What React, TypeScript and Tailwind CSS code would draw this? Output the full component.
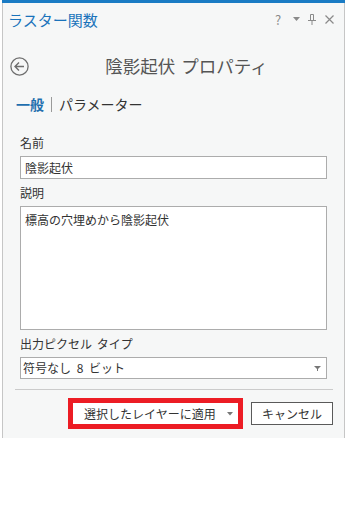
export default function App() {
  return (
    <div className="w-[348px] h-[516px] bg-white font-['Noto_Sans_CJK_JP','Noto_Sans',sans-serif] text-[#333]">
      <div className="ml-[2px] w-[343px] h-[438px] flex flex-col">
        {/* top accent */}
        <div className="h-[3px] bg-[#1a7bc4]" />
        <div className="flex-1 flex flex-col bg-[#f6f7f7] border-x border-[#c6c6c6]">
          {/* pane header */}
          <div className="h-[32px] flex items-center pl-[5px]">
            <span className="text-[15px] leading-none text-[#1a73bb]">ラスター関数</span>
            <div className="ml-auto flex items-center text-[#8a8a8a]">
              <span className="text-[13px] leading-none w-[8px]">?</span>
              <svg width="7" height="4" viewBox="0 0 7 4" className="ml-[10px]">
                <polygon points="0,0 7,0 3.5,4" fill="#8a8a8a" />
              </svg>
              <svg width="8" height="11" viewBox="0 0 8 11" className="ml-[8px]">
                <path d="M2.5 0.5h3v5.5 M2.5 0.5v5.5 M0 6.5h8 M4 6.5v4.5" fill="none" stroke="#8a8a8a" strokeWidth="1" />
              </svg>
              <svg width="9" height="9" viewBox="0 0 9 9" className="ml-[9px] mr-[10px]">
                <path d="M0.5 0.5l8 8 M8.5 0.5l-8 8" stroke="#8a8a8a" strokeWidth="1.2" />
              </svg>
            </div>
          </div>

          {/* title row */}
          <div className="mt-[17px] h-[28px] flex items-center pl-[7px]">
            <svg width="19" height="19" viewBox="0 0 19 19">
              <circle cx="9.5" cy="9.5" r="8.6" fill="none" stroke="#6e6e6e" strokeWidth="1.3" />
              <path d="M5 9.5h9 M9 5.5l-4 4 4 4" fill="none" stroke="#6e6e6e" strokeWidth="1.4" />
            </svg>
            <div className="flex-1 text-center text-[17.5px] leading-none text-[#555] [word-spacing:2px]">陰影起伏 プロパティ</div>
          </div>

          {/* tabs */}
          <div className="mt-[12px] h-[24px] flex items-center pl-[13px] text-[14px] leading-none">
            <span className="font-bold text-[#1f6fae]">一般</span>
            <span className="w-px h-[15px] bg-[#9a9a9a] ml-[7px] mr-[7px]" />
            <span className="text-[#333]">パラメーター</span>
          </div>

          {/* form */}
          <div className="mt-[19px] px-[17px] flex flex-col">
            <div className="h-[16px] text-[12px] leading-[16px]">名前</div>
            <div className="mt-[5px] h-[23px] border border-[#acacac] bg-white px-[4px] flex items-center text-[12px]">
              陰影起伏
            </div>

            <div className="mt-[6px] h-[16px] text-[12px] leading-[16px]">説明</div>
            <div className="mt-[5px] h-[124px] border border-[#acacac] bg-white px-[4px] pt-[3px] text-[12px] leading-[20px]">
              標高の穴埋めから陰影起伏
            </div>

            <div className="mt-[6px] h-[16px] text-[12px] leading-[16px] [word-spacing:2px]">出力ピクセル タイプ</div>
            <div className="mt-[5px] h-[22px] border border-[#acacac] bg-white pl-[2px] pr-[5px] flex items-center justify-between text-[12px]">
              <span className="[word-spacing:3px]">符号なし 8 ビット</span>
              <svg width="7" height="5" viewBox="0 0 7 5">
                <polygon points="0,0 7,0 3.5,3.5" fill="#777" />
                <rect x="3" y="0" width="1" height="5" fill="#777" />
              </svg>
            </div>
          </div>

          <div className="mt-[10px] ml-[12px] mr-[11px] h-px bg-[#cbcbcb]" />

          {/* buttons */}
          <div className="mt-[8px] flex justify-end items-center gap-[8px] pr-[11px] text-[12px]">
            <div className="w-[175px] h-[31px] border-[5px] border-[#ec1c24] bg-white flex items-center pl-[11px] pr-[5px]">
              <span>選択したレイヤーに適用</span>
              <svg width="6" height="4" viewBox="0 0 6 4" className="ml-auto">
                <polygon points="0,0 6,0 3,3.5" fill="#777" />
              </svg>
            </div>
            <div className="w-[82px] h-[23px] border border-[#5a5a5a] bg-white flex items-center justify-center">
              キャンセル
            </div>
          </div>
        </div>
      </div>
    </div>
  );
}
